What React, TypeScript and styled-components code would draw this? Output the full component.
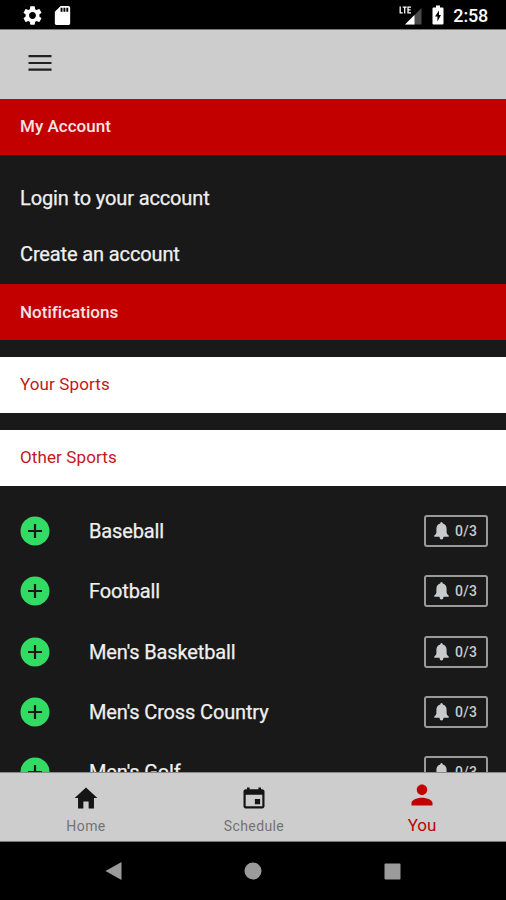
import React from "react";
import styled, { createGlobalStyle } from "styled-components";
import { MdSdCard, MdSettings } from "react-icons/md";
import { IoMdCalendar, IoMdHome, IoMdPerson } from "react-icons/io";

const GlobalStyle = createGlobalStyle`
  * {
    box-sizing: border-box;
  }

  body {
    margin: 0;
    background: #000;
    font-family: Roboto, "Noto Sans", sans-serif;
  }

  svg {
    display: block;
    flex-shrink: 0;
  }
`;

const Screen = styled.div`
  width: 506px;
  height: 900px;
  display: flex;
  flex-direction: column;
  overflow: hidden;
  background: #191919;
`;

const StatusBar = styled.div`
  height: 30px;
  flex-shrink: 0;
  display: flex;
  align-items: center;
  justify-content: space-between;
  padding: 1px 18px 0 21px;
  background: #000;
  border-bottom: 1px solid #777;
  color: #fff;
`;

const StatusGroup = styled.div<{ $gap: number }>`
  display: flex;
  align-items: center;
  gap: ${(props) => props.$gap}px;
`;

const Clock = styled.span`
  padding-top: 1px;
  font-size: 18px;
  font-weight: 500;
  line-height: 20px;
  letter-spacing: -0.2px;
`;

const Toolbar = styled.header`
  height: 69px;
  flex-shrink: 0;
  display: flex;
  align-items: center;
  padding: 0 0 3px 28px;
  background: #cdcdcd;
  color: #222;
`;

const Content = styled.main`
  flex: 1;
  min-height: 0;
  overflow: hidden;
`;

const SectionHeader = styled.h2<{ $lift?: number }>`
  height: 56px;
  margin: 0;
  padding: 0 20px ${(props) => props.$lift ?? 1}px;
  display: flex;
  align-items: center;
  background: #c20000;
  color: #f6e4e4;
  font-size: 17px;
  font-weight: 500;
  letter-spacing: 0.02px;
`;

const AccountLinks = styled.div`
  height: 129px;
  padding-top: 15px;
`;

const AccountLink = styled.a`
  height: 56px;
  padding: 0 20px;
  display: flex;
  align-items: center;
  color: #f0f0f0;
  font-size: 20px;
  letter-spacing: -0.13px;
  -webkit-text-stroke: 0.25px #f0f0f0;
`;

const SportsDivider = styled.h3`
  height: 56px;
  margin: 17px 0 0;
  padding: 0 20px 3px;
  display: flex;
  align-items: center;
  background: #fff;
  color: #c2181b;
  font-size: 17px;
  font-weight: 400;
  letter-spacing: 0.12px;
`;

const SportList = styled.ul`
  margin: 0;
  padding: 15px 0 0;
  list-style: none;
`;

const SportRow = styled.li`
  height: 60.3px;
  padding: 0 18px 0 20px;
  display: flex;
  align-items: center;
`;

const SportName = styled.span`
  flex: 1;
  padding-left: 39px;
  color: #f0f0f0;
  font-size: 20px;
  letter-spacing: -0.14px;
  -webkit-text-stroke: 0.25px #f0f0f0;
`;

const AlertCount = styled.span`
  width: 64px;
  height: 32px;
  display: flex;
  align-items: center;
  padding-left: 8px;
  gap: 6px;
  border: 2px solid #9a9a9a;
  border-radius: 3px;
  color: #c8cacb;
  font-size: 14px;
  font-weight: 500;
  letter-spacing: 0.3px;
`;

const TabBar = styled.nav`
  height: 70px;
  flex-shrink: 0;
  display: flex;
  padding-left: 2px;
  background: #cdcdcd;
  border-top: 1px solid #8a8a8a;
  border-bottom: 1px solid #777;
`;

const Tab = styled.a<{ $active?: boolean }>`
  flex: 1;
  display: flex;
  flex-direction: column;
  align-items: center;
  padding-top: ${(props) => (props.$active ? "8px" : "11px")};
  color: ${(props) => (props.$active ? "#c20000" : "#151515")};
`;

const TabLabel = styled.span<{ $active?: boolean }>`
  margin-top: ${(props) => (props.$active ? "7px" : "5px")};
  color: ${(props) => (props.$active ? "#c20000" : "#737373")};
  font-size: ${(props) => (props.$active ? "17px" : "14px")};
  line-height: 18px;
  letter-spacing: ${(props) => (props.$active ? "0" : "0.4px")};
`;

const SystemNav = styled.div`
  height: 58px;
  flex-shrink: 0;
  display: flex;
  align-items: center;
  justify-content: center;
  gap: 122px;
  background: #000;
`;

const SPORTS = [
  "Baseball",
  "Football",
  "Men's Basketball",
  "Men's Cross Country",
  "Men's Golf",
];

const SignalIcon = () => (
  <svg width="23" height="20" viewBox="0 0 23 20">
    <path d="M22.5 3v16.5H6z" fill="#4a4a4a" />
    <path d="M15.5 10v9.5H6z" fill="#fff" />
    <path
      d="M1.2 1.5v6.3h2.5M3.7 2.1h4M5.7 2.1v6.3M12 2.1H9v5.7h3M9 4.9h2.6"
      fill="none"
      stroke="#fff"
      strokeWidth="1.3"
    />
  </svg>
);

const BatteryIcon = () => (
  <svg width="12" height="20" viewBox="0 0 12 20">
    <path d="M4 .5h4v2h2.5q1 0 1 1v15q0 1-1 1h-9q-1 0-1-1v-15q0-1 1-1H4z" fill="#fff" />
    <path d="M7 5.5 3 11.5h2.4V16.5L9 10H7z" fill="#000" />
  </svg>
);

const MenuIcon = () => (
  <svg width="24" height="18" viewBox="0 0 24 18">
    <path
      d="M.5 2.2h23M.5 9h23M.5 15.7h23"
      stroke="currentColor"
      strokeWidth="2.2"
    />
  </svg>
);

const AddIcon = () => (
  <svg width="30" height="30" viewBox="0 0 30 30">
    <circle cx="15" cy="15" r="14.5" fill="#32db64" />
    <path d="M8 15h14M15 8v14" stroke="#191919" strokeWidth="2.2" />
  </svg>
);

const BellIcon = () => (
  <svg width="15" height="18" viewBox="0 0 15 18">
    <path
      d="M7.5 0q1.3 0 1.3 1.5C11.5 2.2 12.6 4.2 12.6 7v3.5q0 1.4 2.1 3v1.2H9.6Q9.4 17.5 7.5 17.5T5.4 14.7H.3v-1.2q2.1-1.6 2.1-3V7C2.4 4.2 3.5 2.2 6.2 1.5Q6.2 0 7.5 0z"
      fill="currentColor"
    />
  </svg>
);

const App: React.FC = () => (
  <Screen>
    <GlobalStyle />
    <StatusBar>
      <StatusGroup $gap={7}>
        <MdSettings size={23} />
        <MdSdCard size={23} />
      </StatusGroup>
      <StatusGroup $gap={9.5}>
        <SignalIcon />
        <BatteryIcon />
        <Clock>2:58</Clock>
      </StatusGroup>
    </StatusBar>
    <Toolbar>
      <MenuIcon />
    </Toolbar>
    <Content>
      <SectionHeader $lift={3}>My Account</SectionHeader>
      <AccountLinks>
        <AccountLink>Login to your account</AccountLink>
        <AccountLink>Create an account</AccountLink>
      </AccountLinks>
      <SectionHeader>Notifications</SectionHeader>
      <SportsDivider>Your Sports</SportsDivider>
      <SportsDivider>Other Sports</SportsDivider>
      <SportList>
        {SPORTS.map((sport) => (
          <SportRow key={sport}>
            <AddIcon />
            <SportName>{sport}</SportName>
            <AlertCount>
              <BellIcon />
              0/3
            </AlertCount>
          </SportRow>
        ))}
      </SportList>
    </Content>
    <TabBar>
      <Tab>
        <IoMdHome size={28} />
        <TabLabel>Home</TabLabel>
      </Tab>
      <Tab>
        <IoMdCalendar size={28} />
        <TabLabel>Schedule</TabLabel>
      </Tab>
      <Tab $active>
        <IoMdPerson size={28} />
        <TabLabel $active>You</TabLabel>
      </Tab>
    </TabBar>
    <SystemNav>
      <svg width="17" height="18" viewBox="0 0 17 18">
        <path d="M16.5 0v18L.5 9z" fill="#9b9b9b" />
      </svg>
      <svg width="18" height="18" viewBox="0 0 18 18">
        <circle cx="9" cy="9" r="8.5" fill="#9b9b9b" />
      </svg>
      <svg width="17" height="17" viewBox="0 0 17 17">
        <rect x="0.5" y="0.5" width="16" height="16" rx="1" fill="#9b9b9b" />
      </svg>
    </SystemNav>
  </Screen>
);

export default App;
